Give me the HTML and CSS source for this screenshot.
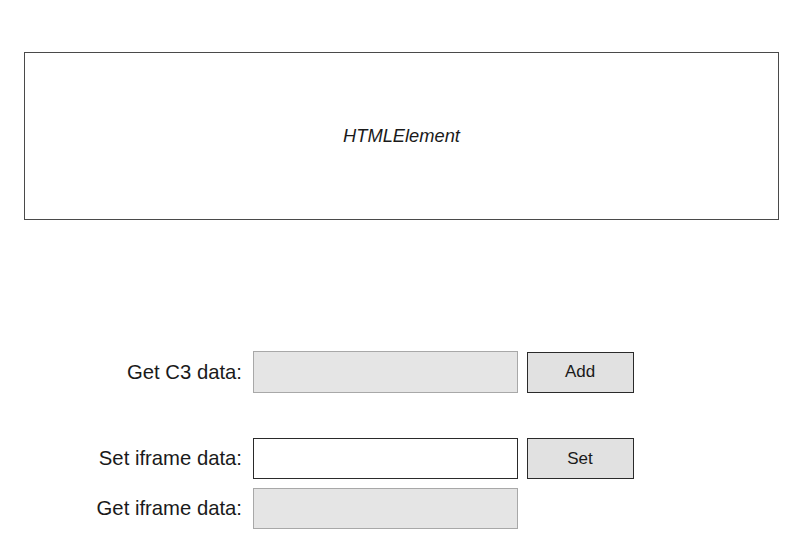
FILE: index.html
```html
<!DOCTYPE html>
<html>
<head>
<meta charset="utf-8">
<link rel="stylesheet" href="styles.css">
</head>
<body>
<div class="page">
  <div class="element-box"><span class="element-label">HTMLElement</span></div>
  <div class="form">
    <div class="row row-first">
      <label class="label">Get C3 data:</label>
      <input class="field field-disabled" type="text" disabled>
      <button class="btn">Add</button>
    </div>
    <div class="row row-second">
      <label class="label">Set iframe data:</label>
      <input class="field field-active" type="text">
      <button class="btn">Set</button>
    </div>
    <div class="row row-third">
      <label class="label">Get iframe data:</label>
      <input class="field field-disabled" type="text" disabled>
    </div>
  </div>
</div>
</body>
</html>
```
FILE: styles.css
```css
html, body {
  margin: 0;
  padding: 0;
  background: #ffffff;
}
body {
  font-family: "Liberation Sans", Arial, sans-serif;
  color: #1a1a1a;
}
.page {
  padding: 52px 0 0 24px;
}
.element-box {
  box-sizing: border-box;
  width: 755px;
  height: 168px;
  border: 1.25px solid #4a4a4a;
  display: flex;
  align-items: center;
  justify-content: center;
}
.element-label {
  font-style: italic;
  font-size: 18.3px;
  color: #1a1a1a;
}
.form {
  margin-top: 131px;
  margin-left: -24px;
  display: flex;
  flex-direction: column;
}
.row {
  display: flex;
  align-items: center;
}
.row-second {
  margin-top: 45px;
}
.row-third {
  margin-top: 9px;
}
.label {
  padding-right: 10.5px;
  box-sizing: border-box;
  width: 252.5px;
  text-align: right;
  font-size: 20.3px;
  color: #1a1a1a;
}
.field {
  box-sizing: border-box;
  width: 265px;
  height: 41px;
  margin: 0;
  padding: 0 4px;
  font-family: "Liberation Sans", Arial, sans-serif;
  font-size: 16.67px;
  border-radius: 0;
  outline: none;
}
.row-first .field {
  height: 42px;
}
.field-disabled {
  background: #e5e5e5;
  border: 1.5px solid #a8a8a8;
}
.field-active {
  background: #ffffff;
  border: 1.5px solid #2a2a2a;
}
.btn {
  box-sizing: border-box;
  width: 107px;
  height: 41px;
  margin: 0 0 0 9px;
  padding: 0;
  background: #e1e1e1;
  border: 1.5px solid #2a2a2a;
  border-radius: 0;
  font-family: "Liberation Sans", Arial, sans-serif;
  font-size: 17px;
  color: #1a1a1a;
}
```
